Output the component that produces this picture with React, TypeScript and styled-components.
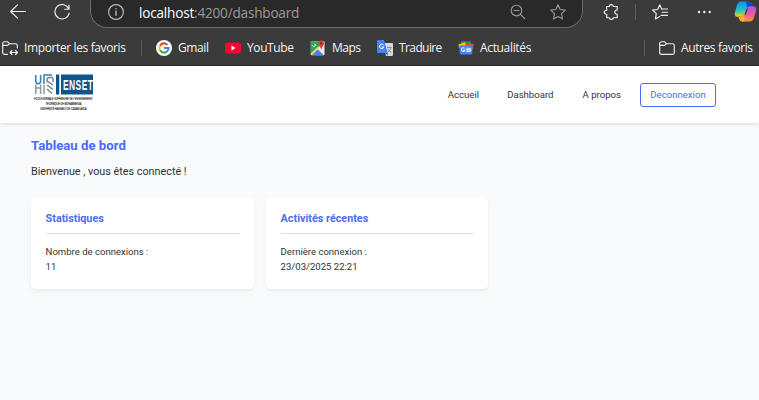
import React from 'react';
import styled, { createGlobalStyle } from 'styled-components';

const GlobalStyle = createGlobalStyle`
  * { box-sizing: border-box; }
  body { margin: 0; background: #f8fafc; overflow: hidden; }
`;

const Window = styled.div`
  width: 759px;
  height: 400px;
  overflow: hidden;
  display: flex;
  flex-direction: column;
  background: #f8fafc;
`;

const BrowserChrome = styled.header`
  flex: none;
  height: 66px;
  background: #3b3b3b;
  border-bottom: 1px solid #303030;
  color: #f4f4f4;
  font-family: 'Open Sans', 'Noto Sans', sans-serif;
  svg { display: block; flex: none; }
`;

const Toolbar = styled.div`
  height: 28px;
  display: flex;
  align-items: flex-start;
`;

const ToolIcon = styled.span<{ $left: number; $top?: number }>`
  margin-left: ${p => p.$left}px;
  margin-top: ${p => p.$top ?? 4}px;
  flex: none;
`;

const AddressBar = styled.div`
  width: 493px;
  height: 28px;
  margin-left: 20px;
  flex: none;
  display: flex;
  align-items: flex-start;
  background: #292929;
  border: 1px solid #6c6c6c;
  border-top: 0;
  border-radius: 0 0 17px 17px;
`;

const Url = styled.span`
  width: 371px;
  margin: 3px 0 0 15px;
  font-size: 13.6px;
  line-height: 20px;
  letter-spacing: -0.21px;
  color: #999;
  white-space: nowrap;
  b { color: #fff; font-weight: 400; }
`;

const Bookmarks = styled.nav`
  height: 37px;
  padding: 3px 0 0 2px;
  display: flex;
  align-items: center;
`;

const Bookmark = styled.a<{ $w: number }>`
  display: flex;
  align-items: center;
  gap: 6px;
  width: ${p => p.$w + 22}px;
  margin-right: 17px;
  flex: none;
  font-size: 12px;
  line-height: 18px;
  white-space: nowrap;
`;

const BookmarkText = styled.span<{ $track: number }>`
  letter-spacing: ${p => p.$track}px;
`;

const Divider = styled.i<{ $left?: number; $right?: number }>`
  width: 1px;
  height: 16px;
  flex: none;
  background: #5c5c5c;
  margin: 0 ${p => p.$right ?? 0}px 0 ${p => p.$left ?? 0}px;
`;

const ToolDivider = styled(Divider)`
  margin-top: 4px;
`;

const Site = styled.div`
  flex: 1;
  font-family: Roboto, sans-serif;
  color: #333;
`;

const SiteNav = styled.div`
  height: 57px;
  padding: 0 43px 0 33px;
  display: flex;
  align-items: center;
  background: #fff;
  box-shadow: 0 1px 4px rgba(0, 0, 0, 0.13);
`;

const Links = styled.div`
  margin-left: auto;
  display: flex;
  align-items: center;
  font-size: 9.6px;
`;

const Link = styled.a<{ $gap: number }>`
  margin-right: ${p => p.$gap}px;
`;

const Logout = styled.button`
  width: 76px;
  height: 24px;
  padding: 0;
  border: 1px solid #4a6cf7;
  border-radius: 3px;
  background: #fff;
  color: #4a6cf7;
  font: 9.6px Roboto, sans-serif;
`;

const Content = styled.main`
  padding: 13px 31px;
`;

const Title = styled.h1`
  margin: 0;
  font-size: 13.2px;
  line-height: 19px;
  font-weight: 700;
  color: #4a6cf7;
`;

const Welcome = styled.p`
  margin: 8px 0 16px;
  font-size: 10.8px;
  line-height: 18px;
`;

const Cards = styled.div`
  display: grid;
  grid-template-columns: 223px 222px;
  gap: 12px;
`;

const Card = styled.section`
  height: 92px;
  padding: 14px 14px 0 14.6px;
  border-radius: 5px;
  background: #fff;
  box-shadow: 0 2px 4px rgba(0, 0, 0, 0.06);
`;

const CardTitle = styled.h2`
  margin: 0 0 10px;
  height: 23px;
  border-bottom: 1px solid #dedfea;
  font-size: 10.8px;
  line-height: 16px;
  font-weight: 700;
  color: #4a6cf7;
`;

const CardText = styled.p`
  margin: 0;
  font-size: 9.55px;
  line-height: 15px;
`;

const Line = ({ children, w = 16, h = 16, color = '#eee' }: { children: React.ReactNode; w?: number; h?: number; color?: string }) => (
  <svg width={w} height={h} viewBox={`0 0 ${w} ${h}`} fill="none" stroke={color} strokeWidth="1.15" strokeLinecap="round" strokeLinejoin="round">
    {children}
  </svg>
);

const FOLDER = 'M.7 3.5Q.7 1.7 2.5 1.7H5.4L7.5 3.7H13.5Q15.3 3.7 15.3 5.5';
const STAR = 'M8 .8 10.2 5.5 15.3 6.1 11.5 9.7 12.5 15 8 12.4 3.5 15 4.5 9.7.7 6.1 5.8 5.5Z';

const GoogleIcon = () => (
  <svg width="16" height="16" viewBox="0 0 16 16">
    <circle cx="8" cy="8" r="8" fill="#fff" />
    <g fill="none" strokeWidth="2.1">
      <path d="M4 5.7A4.6 4.6 0 0 1 11.4 4.9" stroke="#ea4335" />
      <path d="M4 10.3A4.6 4.6 0 0 1 4 5.7" stroke="#fbbc05" />
      <path d="M11 11.5A4.6 4.6 0 0 1 4 10.3" stroke="#34a853" />
      <path d="M8 8H12.6Q12.5 10.3 11 11.5" stroke="#4285f4" />
    </g>
  </svg>
);

const YouTubeIcon = () => (
  <svg width="16" height="16" viewBox="0 0 16 16">
    <rect y="2.5" width="16" height="11" rx="2.8" fill="#ff0033" />
    <path d="M6.5 5.6 10.5 8 6.5 10.4Z" fill="#fff" />
  </svg>
);

const MapsIcon = () => (
  <svg width="16" height="16" viewBox="0 0 16 16">
    <rect x=".8" y="1.2" width="13.7" height="14" rx="1" fill="#e7e8e9" />
    <path d="M.8 2.2Q.8 1.2 1.8 1.2H10L11 5 .8 14Z" fill="#2da45b" />
    <path d="M1.5 15.2 7.5 9 13.8 15.2Z" fill="#4285f4" />
    <path d="M1 14.7 9 6.8" stroke="#fdd663" strokeWidth="1.8" />
    <path d="M2.2 5.3A1.7 1.7 0 1 0 5 3.7M4 5h1.5" stroke="#d9f1df" fill="none" />
    <path d="M11.2 9.7C10.9 7.2 8.4 6.2 8.4 3.3A2.8 2.8 0 0 1 14 3.3C14 6.2 11.5 7.2 11.2 9.7Z" fill="#db4437" />
    <circle cx="11.2" cy="3.3" r="1.1" fill="#7b241d" />
  </svg>
);

const TranslateIcon = () => (
  <svg width="16" height="16" viewBox="0 0 16 16">
    <path d="M6 3H15Q16 3 16 4V15Q16 16 15 16H9Z" fill="#d9d9d9" />
    <path d="M8.5 13 11 16 10.5 12.5Z" fill="#3154b5" />
    <path d="M1 0H7L10.6 13H1Q0 13 0 12V1Q0 0 1 0Z" fill="#4285f4" />
    <path d="M6.4 5A2.2 2.2 0 1 0 6.8 7H4.8" fill="none" stroke="#fff" />
    <path d="M10 7.5H14.7M12.3 6.5V7.5M13.8 7.8Q13 11 10.8 12.2M10.6 8.8Q12 11.5 14.4 12.3" fill="none" stroke="#75808b" strokeWidth=".8" />
  </svg>
);

const NewsIcon = () => (
  <svg width="16" height="16" viewBox="0 0 16 16">
    <path d="M3 1.3H13V7H3Z" fill="#0f9d58" />
    <path d="M.3 4.5 7 2 9 8H1Z" fill="#fbbc04" />
    <path d="M8 2.7 15.8 4 15 9H7Z" fill="#ea4335" />
    <path d="M1.2 5.4H14.8L14.2 13.5Q14.1 14.5 13 14.5H3Q1.9 14.5 1.8 13.5Z" fill="#4285f4" />
    <path d="M6.5 8.3A1.8 1.8 0 1 0 7 10H5.4M9 8.2H11.4Q12.8 8.2 12.8 9.8T11.4 11.4H9ZM9 9.8H12" fill="none" stroke="#e5efff" strokeWidth="1.1" />
  </svg>
);

const CopilotIcon = () => (
  <svg width="23" height="21" viewBox="0 0 23 21">
    <defs>
      <linearGradient id="cool" x1="0" y1="0" x2="0" y2="1">
        <stop stopColor="#168de7" /><stop offset=".45" stopColor="#18b6dd" /><stop offset=".75" stopColor="#69cf70" /><stop offset="1" stopColor="#f4d21e" />
      </linearGradient>
      <linearGradient id="warm" x1="0" y1="0" x2="0" y2="1">
        <stop stopColor="#a05af0" /><stop offset=".5" stopColor="#ee579a" /><stop offset="1" stopColor="#ff963f" />
      </linearGradient>
    </defs>
    <path d="M7 .4H14.5Q17 .4 17.8 3L18.6 5.2H16Q13.5 5.2 12.8 7.8L11 13Q10 15.8 7 15.8H4Q-.2 15.8 1 11L3 4Q4 .4 7 .4Z" fill="url(#cool)" />
    <path d="M12 .4H14.5Q17 .4 17.8 3L18.6 5.2H16Q13.8 5.2 13 7.5Z" fill="#1646bb" />
    <path d="M15.5 5.2H19Q23 5.2 22 10L20 16.5Q18.9 20.5 15.5 20.5H8.5Q6 20.5 5.3 18L4.5 15.8H7Q9.5 15.8 10.5 13L12.3 7.8Q13.2 5.2 15.5 5.2Z" fill="url(#warm)" />
    <path d="M4.5 15.8H7Q9.2 15.8 10.2 13.8L10.8 20.5H8.5Q6 20.5 5.3 18Z" fill="#ffad30" />
    <path d="M12.7 7.5H14L11.8 13.5H10.5Z" fill="#3b3b3b" />
  </svg>
);

const SchoolLogo = () => (
  <svg width="62" height="41" viewBox="0 0 62 41" overflow="visible">
    <g fill="none" strokeWidth="1.5">
      <path d="M2.8 1V7Q2.8 9.7 5.2 9.7T7.6 7V1" stroke="#347fae" />
      <path d="M2.8 20V10.5M2.8 14H7.6M7.6 20V10.5M11 11V20" stroke="#8b969d" />
      <path d="M11 10V1H19" stroke="#347fae" />
      <path d="M20 3.5H16.5Q14 3.5 14 6T16.5 8.5L20 11M14 11 20 15.5M14 15 19 19.5M20 8V4" stroke="#78858d" />
    </g>
    <path d="M23 .5H26.3V20.5H23Z" fill="#11548b" />
    <path d="M28 .5H60V20.5H28Z" fill="#11548b" />
    <text transform="translate(30 15.5) scale(.6 1)" fill="#fff" fontFamily="Liberation Sans, sans-serif" fontWeight="700" fontSize="14" letterSpacing=".8">ENSET</text>
    <g fontFamily="Liberation Sans, sans-serif" fontSize="4.4" fill="#111" stroke="#222" strokeWidth=".15" textAnchor="middle">
      <text transform="translate(30.5 26) scale(.51 1)">ECOLE NORMALE SUPÉRIEURE DE L'ENSEIGNEMENT</text>
      <text transform="translate(30.5 31) scale(.55 1)">TECHNIQUE DE MOHAMMEDIA</text>
      <text transform="translate(30.5 35.8) scale(.53 1)">UNIVERSITÉ HASSAN II DE CASABLANCA</text>
    </g>
  </svg>
);

const bookmarks = [
  { label: 'Gmail', w: 30, track: -0.4, icon: <GoogleIcon /> },
  { label: 'YouTube', w: 46, track: -0.4, icon: <YouTubeIcon /> },
  { label: 'Maps', w: 28, track: -0.5, icon: <MapsIcon /> },
  { label: 'Traduire', w: 42, track: -0.6, icon: <TranslateIcon /> },
  { label: 'Actualités', w: 51, track: -0.34, icon: <NewsIcon /> },
];

export default function App() {
  return (
    <>
      <GlobalStyle />
      <Window>
        <BrowserChrome>
          <Toolbar>
            <ToolIcon $left={10}><Line><path d="M15.5 7.5H.7M7.5.8.7 7.5 7.5 14.2" /></Line></ToolIcon>
            <ToolIcon $left={28}><Line><path d="M14.8 5A7.2 7.2 0 1 0 15.2 9M15 1V5.2H10.8" /></Line></ToolIcon>
            <AddressBar>
              <ToolIcon $left={17}><Line color="#bbb"><circle cx="8" cy="8" r="7.4" /><path d="M8 7.2V11.3M8 4.7V4.9" strokeWidth="1.4" /></Line></ToolIcon>
              <Url><b>localhost</b>:4200/dashboard</Url>
              <ToolIcon $left={0}><Line color="#999"><circle cx="6.5" cy="6.5" r="5.3" /><path d="M4 6.5H9M10.4 10.4 14.7 14.7" /></Line></ToolIcon>
              <ToolIcon $left={24}><Line color="#999"><path d={STAR} /></Line></ToolIcon>
            </AddressBar>
            <ToolIcon $left={20}>
              <Line><path d="M3.7 2.5H6.3C6.3-.1 10.3-.1 10.3 2.5H14.2V6C11 6 11 10.2 14.2 10.2V13.7H10.3C10.3 16 6.3 16 6.3 13.7H3.7V10.3C.4 10.3.4 6.4 3.7 6.4Z" /></Line>
            </ToolIcon>
            <ToolDivider $left={16} />
            <ToolIcon $left={16}><Line><path d="M9.8 5.3 7.8.8 5.6 5.5.6 6.1 4.3 9.7 3.4 15 7.7 12.5M10 5H15.8M10 8.2H15.8M9 11.4H15.8" /></Line></ToolIcon>
            <ToolIcon $left={29}><Line color="none"><g fill="#eee"><circle cx="2" cy="8" r="1.2" /><circle cx="7.3" cy="8" r="1.2" /><circle cx="12.7" cy="8" r="1.2" /></g></Line></ToolIcon>
            <ToolIcon $left={21} $top={1}><CopilotIcon /></ToolIcon>
          </Toolbar>
          <Bookmarks>
            <Bookmark $w={101}>
              <Line><path d={`${FOLDER}V8M7.5 3.7 5.5 5.4H1M.7 3.5V12.5Q.7 14.3 2.5 14.3H5.5M8 12.5H15.5M10 10.5 8 12.5 10 14.5M13.5 10.5 15.5 12.5 13.5 14.5`} /></Line>
              <BookmarkText $track={-0.38}>Importer les favoris</BookmarkText>
            </Bookmark>
            <Divider $left={-1} $right={14} />
            {bookmarks.map(b => (
              <Bookmark key={b.label} $w={b.w}>
                {b.icon}
                <BookmarkText $track={b.track}>{b.label}</BookmarkText>
              </Bookmark>
            ))}
            <Divider $left={96} $right={14} />
            <Bookmark $w={73}>
              <Line><path d={`${FOLDER}V12.5Q15.3 14.3 13.5 14.3H2.5Q.7 14.3.7 12.5ZM7.5 3.7 5.5 5.4H1`} /></Line>
              <BookmarkText $track={-0.4}>Autres favoris</BookmarkText>
            </Bookmark>
          </Bookmarks>
        </BrowserChrome>
        <Site>
          <SiteNav>
            <SchoolLogo />
            <Links>
              <Link $gap={28}>Accueil</Link>
              <Link $gap={29}>Dashboard</Link>
              <Link $gap={19}>A propos</Link>
              <Logout>Deconnexion</Logout>
            </Links>
          </SiteNav>
          <Content>
            <Title>Tableau de bord</Title>
            <Welcome>Bienvenue , vous êtes connecté !</Welcome>
            <Cards>
              <Card>
                <CardTitle>Statistiques</CardTitle>
                <CardText>Nombre de connexions :</CardText>
                <CardText>11</CardText>
              </Card>
              <Card>
                <CardTitle>Activités récentes</CardTitle>
                <CardText>Dernière connexion :</CardText>
                <CardText>23/03/2025 22:21</CardText>
              </Card>
            </Cards>
          </Content>
        </Site>
      </Window>
    </>
  );
}
